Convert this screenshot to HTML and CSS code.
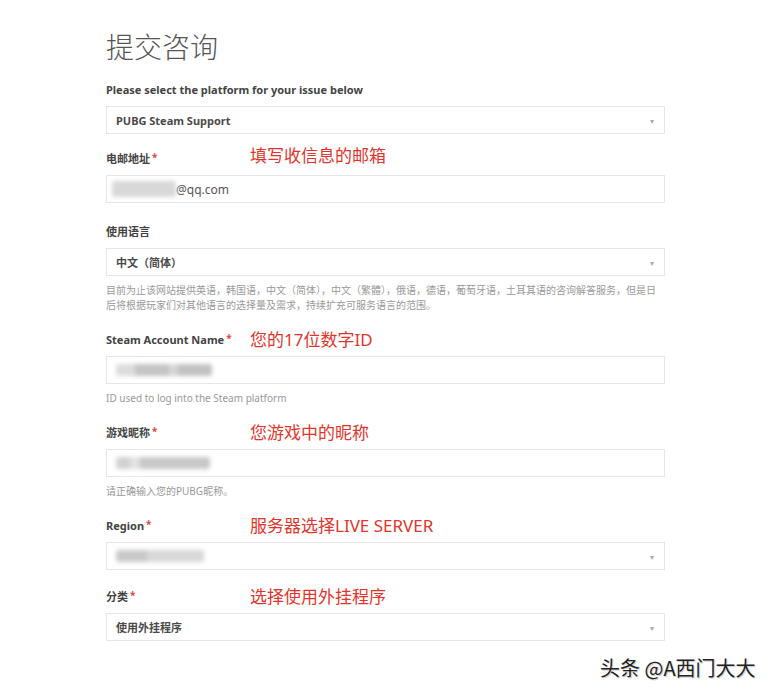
FILE: index.html
```html
<!DOCTYPE html>
<html lang="zh-CN">
<head>
  <meta charset="UTF-8" />
  <title>提交咨询</title>
  <link rel="stylesheet" href="styles.css">
</head>
<body>
  <div class="page">
    <h1 class="title">提交咨询</h1>

    <div class="field field-first">
      <div class="label-row"><label>Please select the platform for your issue below</label></div>
      <div class="box select"><span class="value">PUBG Steam Support</span><span class="arrow">▾</span></div>
    </div>

    <div class="field field-mail">
      <div class="label-row">
        <label>电邮地址<span class="req">*</span></label>
        <span class="note">填写收信息的邮箱</span>
      </div>
      <div class="box"><span class="blur blur-mail"></span><span class="value plain">@qq.com</span></div>
    </div>

    <div class="field">
      <div class="label-row"><label>使用语言</label></div>
      <div class="box select"><span class="value">中文（简体）</span><span class="arrow">▾</span></div>
      <p class="help">目前为止该网站提供英语，韩国语，中文（简体），中文（繁體），俄语，德语，葡萄牙语，土耳其语的咨询解答服务，但是日<br>后将根据玩家们对其他语言的选择量及需求，持续扩充可服务语言的范围。</p>
    </div>

    <div class="field">
      <div class="label-row">
        <label>Steam Account Name<span class="req">*</span></label>
        <span class="note">您的17位数字ID</span>
      </div>
      <div class="box"><span class="blur blur-steam"></span></div>
      <p class="help">ID used to log into the Steam platform</p>
    </div>

    <div class="field">
      <div class="label-row">
        <label>游戏昵称<span class="req">*</span></label>
        <span class="note">您游戏中的昵称</span>
      </div>
      <div class="box"><span class="blur blur-nick"></span></div>
      <p class="help">请正确输入您的PUBG昵称。</p>
    </div>

    <div class="field">
      <div class="label-row">
        <label>Region<span class="req">*</span></label>
        <span class="note">服务器选择LIVE SERVER</span>
      </div>
      <div class="box select"><span class="blur blur-region"></span><span class="arrow">▾</span></div>
    </div>

    <div class="field">
      <div class="label-row">
        <label>分类<span class="req">*</span></label>
        <span class="note">选择使用外挂程序</span>
      </div>
      <div class="box select"><span class="value">使用外挂程序</span><span class="arrow">▾</span></div>
    </div>
  </div>

  <div class="watermark">头条 @A西门大大</div>
</body>
</html>
```

FILE: styles.css
```css
* {
    margin: 0;
    padding: 0;
    box-sizing: border-box;
}

body {
    background-color: #fff;
    font-family: "Noto Sans", "Noto Sans CJK SC", sans-serif;
    color: #444;
    position: relative;
    width: 774px;
    height: 694px;
    overflow: hidden;
}

.page {
    width: 559px;
    margin-left: 106px;
    padding-top: 29px;
}

.title {
    font-size: 28px;
    line-height: 36px;
    font-weight: 300;
    color: #555;
    margin-bottom: 14px;
}

.field {
    margin-bottom: 16px;
}

.field-first {
    margin-bottom: 14px;
}

.field-mail {
    margin-bottom: 18px;
}

.label-row {
    display: flex;
    align-items: center;
    height: 20px;
    margin-bottom: 7px;
}

.label-row label {
    width: 144px;
    flex-shrink: 0;
    font-size: 11px;
    font-weight: 700;
    color: #444;
    white-space: nowrap;
}

.req {
    color: #e0463a;
    font-size: 10px;
    margin-left: 2px;
    position: relative;
    top: -2px;
}

/* 红色标注 */
.note {
    font-size: 17px;
    color: #e3342b;
    margin-top: -2px;
    white-space: nowrap;
}

.field-mail .note {
    margin-top: -8px;
}

.box {
    height: 28px;
    border: 1px solid #e6e6e6;
    background: #fff;
    display: flex;
    align-items: center;
    padding: 0 10px 0 9px;
}

.value {
    font-size: 11px;
    font-weight: 700;
    color: #4a4a4a;
}

.value.plain {
    font-weight: 400;
    font-size: 12px;
    color: #555;
}

.select .arrow {
    margin-left: auto;
    font-size: 8px;
    color: #aaa;
}

.help {
    margin-top: 7px;
    font-size: 10px;
    line-height: 15px;
    color: #999;
    white-space: nowrap;
}

/* 打码区域 */
.blur {
    display: block;
    height: 12px;
    background: #cfcfcf;
    filter: blur(2px);
    border-radius: 3px;
}

.blur-mail {
    width: 64px;
    height: 16px;
    margin-left: -4px;
    background: #d8d8d8;
}

.blur-steam {
    width: 96px;
    background: linear-gradient(90deg, #dcdcdc 0 20%, #c4c4c4 20% 55%, #d6d6d6 55% 65%, #c2c2c2 65% 100%);
}

.blur-nick {
    width: 94px;
    background: linear-gradient(90deg, #d2d2d2 0 15%, #e2e2e2 15% 25%, #c8c8c8 25% 100%);
}

.blur-region {
    width: 88px;
    background: linear-gradient(90deg, #c8c8c8 0 35%, #d8d8d8 35% 100%);
}

.watermark {
    position: absolute;
    left: 600px;
    top: 653px;
    font-family: "Noto Sans CJK SC", sans-serif;
    font-size: 20px;
    color: #222;
    text-shadow: 0 0 2px #fff, 1px 1px 1px #bbb;
}
```
